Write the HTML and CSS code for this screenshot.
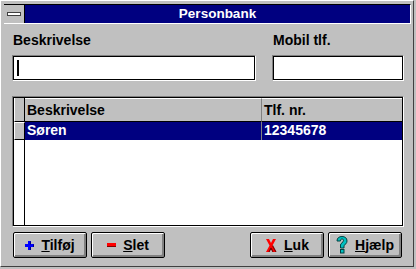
FILE: index.html
```html
<!DOCTYPE html>
<html lang="da">
<head>
    <meta charset="UTF-8">
    <meta name="viewport" content="width=device-width, initial-scale=1.0">
    <title>Personbank</title>
    <link rel="stylesheet" href="styles.css">
</head>
<body>

    <div class="window">
        <!-- Title bar -->
        <div class="titlebar">
            <div class="sysmenu"><span class="sysmenu-bar"></span></div>
            <div class="title">Personbank</div>
        </div>

        <div class="client">
            <!-- Input fields -->
            <div class="fields">
                <div class="field">
                    <label for="beskrivelse">Beskrivelse</label>
                    <div class="input" id="beskrivelse"><span class="caret"></span></div>
                </div>
                <div class="field">
                    <label for="mobil">Mobil tlf.</label>
                    <div class="input" id="mobil"></div>
                </div>
            </div>

            <!-- Person list -->
            <div class="grid">
                <div class="grid-row header">
                    <div class="indicator"></div>
                    <div class="cell col-name">Beskrivelse</div>
                    <div class="cell col-phone">Tlf. nr.</div>
                </div>
                <div class="grid-row selected">
                    <div class="indicator"></div>
                    <div class="cell col-name">Søren</div>
                    <div class="cell col-phone">12345678</div>
                </div>
                <div class="grid-empty">
                    <div class="indicator"></div>
                </div>
            </div>

            <!-- Buttons -->
            <div class="buttons">
                <div class="button-group">
                    <button class="btn">
                        <svg width="9" height="9" viewBox="0 0 9 9"><path d="M3 0h3v3h3v3H6v3H3V6H0V3h3z" fill="#0000ff"/><path d="M5.5 0.5v3M8.5 3.5v2.5M5.5 6v3" stroke="#000080" stroke-width="1" fill="none"/></svg>
                        <span><u>T</u>ilføj</span>
                    </button>
                    <button class="btn">
                        <svg width="9" height="4" viewBox="0 0 9 4"><rect x="0" y="0" width="9" height="4" fill="#ff0000"/><rect x="0" y="3" width="9" height="1" fill="#800000"/></svg>
                        <span><u>S</u>let</span>
                    </button>
                </div>
                <div class="button-group">
                    <button class="btn">
                        <svg width="12" height="13" viewBox="0 0 12 13"><path d="M1 0h3l2 4 2-4h3l-3.5 6.5L11 13H8L6 9l-2 4H1l3.5-6.5z" fill="#ff0000"/><path d="M8 13l-2-4M11 13l-3.5-6.5M4 13l2-4" stroke="#800000" stroke-width="1.2" fill="none"/></svg>
                        <span><u>L</u>uk</span>
                    </button>
                    <button class="btn">
                        <svg width="12" height="18" viewBox="0 0 12 18"><path d="M1 5C1 2 3 0.5 6 0.5S11 2 11 5c0 2.5-2 3.5-3 4.5V12H4.5V9C4.5 7 7.5 6.5 7.5 4.5 7.5 3.5 7 3 6 3S4.5 3.5 4.5 5z" fill="#00c0c0" stroke="#004040" stroke-width="1"/><rect x="4.5" y="13.5" width="3.5" height="3.5" fill="#00c0c0" stroke="#004040" stroke-width="1"/></svg>
                        <span><u>H</u>jælp</span>
                    </button>
                </div>
            </div>
        </div>
    </div>

</body>
</html>
```

FILE: styles.css
```css
/* Page */
body {
    margin: 0;
    background: #c0c0c0;
    font-family: 'Liberation Sans', Arial, sans-serif;
    font-weight: bold;
    font-size: 14px;
    color: #000;
}

/* Window frame */
.window {
    width: 414px;
    height: 267px;
    box-sizing: border-box;
    border: 1px solid;
    border-color: #ffffff #404040 #404040 #ffffff;
    padding: 3px 2px 3px 3px;
    display: flex;
    flex-direction: column;
}

/* Title bar */
.titlebar {
    display: flex;
    height: 20px;
    box-sizing: border-box;
    border-top: 1px solid #000;
    border-bottom: 1px solid #fff;
    border-right: 1px solid #fff;
    background: #000080;
}

.sysmenu {
    width: 20px;
    background: #c0c0c0;
    border-right: 1px solid #000;
    display: flex;
    align-items: center;
    justify-content: center;
}

.sysmenu-bar {
    width: 12px;
    height: 2px;
    background: #fff;
    border: 1px solid #404040;
}

.title {
    flex: 1;
    color: #fff;
    text-align: center;
    font-size: 13.5px;
    line-height: 18px;
}

/* Client area */
.client {
    flex: 1;
    padding: 8px 7px 0 8px;
    display: flex;
    flex-direction: column;
}

.fields {
    display: flex;
    gap: 16px;
}

.field {
    display: flex;
    flex-direction: column;
}

.field:first-child {
    width: 244px;
}

.field:last-child {
    width: 132px;
}

.field label {
    line-height: 16px;
    margin: 0 0 7px 1px;
}

/* Sunken input box */
.input {
    height: 26px;
    box-sizing: border-box;
    background: #fff;
    border: 1px solid;
    border-color: #808080 #ffffff #ffffff #808080;
    box-shadow: inset 0 0 0 1px #000;
    position: relative;
}

.caret {
    position: absolute;
    left: 4px;
    top: 4px;
    width: 2px;
    height: 16px;
    background: #000;
}

/* Grid */
.grid {
    margin-top: 15px;
    height: 131px;
    box-sizing: border-box;
    background: #fff;
    border: 1px solid;
    border-color: #808080 #ffffff #ffffff #808080;
    box-shadow: inset 0 0 0 1px #000;
    padding: 1px;
    display: flex;
    flex-direction: column;
}

.grid-row {
    display: flex;
}

.indicator {
    width: 10px;
    flex: none;
    border-right: 1px solid #000;
}

.grid-row .indicator {
    background: #c0c0c0;
    border-top: 1px solid #fff;
    border-left: 1px solid #fff;
    border-bottom: 1px solid #000;
    width: 9px;
}

.header {
    height: 24px;
    box-sizing: border-box;
}

.header .indicator {
    border-top: none;
}

.header .cell {
    background: #c0c0c0;
    border-bottom: 1px solid #000;
    border-top: 1px solid #fff;
    line-height: 22px;
}

.cell {
    padding-left: 2px;
    box-sizing: border-box;
}

.col-name {
    width: 237px;
    border-right: 1px solid #808080;
}

.col-phone {
    flex: 1;
}

.selected {
    height: 18px;
}

.selected .cell {
    background: #000080;
    color: #fff;
    line-height: 17px;
}

.grid-empty {
    flex: 1;
    display: flex;
}

/* Buttons */
.buttons {
    margin-top: 5px;
    display: flex;
    justify-content: space-between;
    padding: 0 2px 0 1px;
}

.button-group {
    display: flex;
    gap: 4px;
}

.btn {
    width: 74px;
    height: 26px;
    box-sizing: border-box;
    padding: 0;
    font: inherit;
    background: #c0c0c0;
    border: 1px solid #000;
    border-radius: 2px;
    box-shadow: inset 1px 1px 0 #fff, inset -2px -2px 0 #808080;
    display: flex;
    align-items: center;
    justify-content: center;
    gap: 7px;
}

.btn span {
    line-height: 16px;
}
```
